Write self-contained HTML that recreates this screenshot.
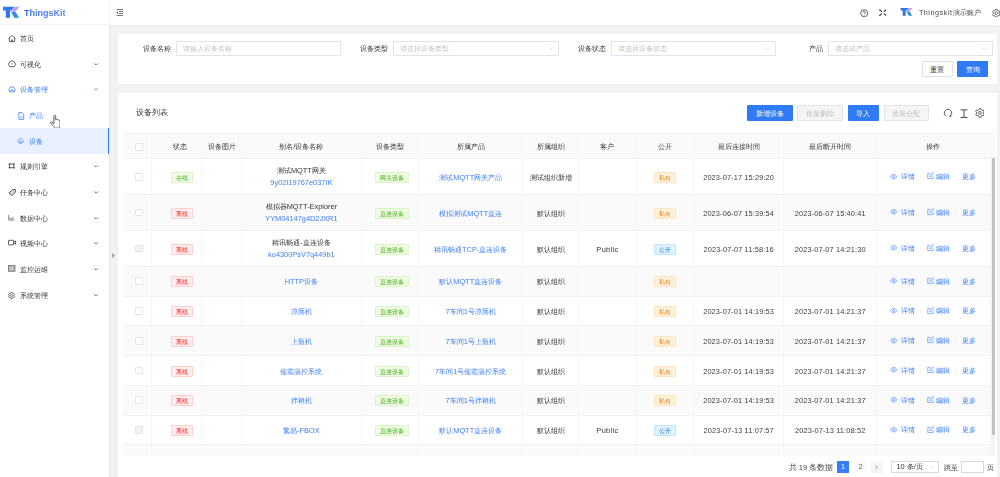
<!DOCTYPE html>
<html><head><meta charset="utf-8">
<style>
*{box-sizing:border-box;margin:0;padding:0}
html,body{width:1000px;height:477px;overflow:hidden;background:#f2f2f4;font-family:"Liberation Sans",sans-serif;font-size:7.4px;color:#333;}
.a{position:absolute}
#side{left:0;top:0;width:109.4px;height:477px;background:#fff;box-shadow:1px 0 2px rgba(0,0,0,.05);z-index:2}
#logo{left:0;top:0;width:109.4px;height:24.7px;border-bottom:1px solid #f3f3f3}
.mi{position:absolute;left:0;width:109.4px;height:25.6px;line-height:25.6px;color:#333;white-space:nowrap}
.mi .ic{position:absolute;left:8px;top:9.2px;width:8.1px;height:7.2px;overflow:visible}
.mi .tx{position:absolute;left:20.3px;top:0.5px;font-size:7.35px}
.mi .chev{position:absolute;left:94.2px;top:11.6px;width:4.4px;height:2.6px}
.mi.sub .ic{left:17.3px}
.mi.sub .tx{left:28.8px}
.mi.blue{color:#377dff}
.mi.sel{background:#e9f1ff;border-right:1.6px solid #377dff}
#hdr{left:109.4px;top:0;width:890.6px;height:24.7px;background:#fff;box-shadow:0 1px 2px rgba(0,0,0,.04)}
.card{position:absolute;left:117.6px;width:879.7px;background:#fff}
.lbl{position:absolute;top:40.5px;height:15.8px;line-height:15.8px;color:#333;text-align:right;white-space:nowrap}
.inp{position:absolute;top:40.5px;height:15.8px;width:164.3px;border:0.6px solid #e3e3e3;border-radius:1px;background:#fff;color:#c4c4c4;padding-left:5.5px;line-height:14.6px;white-space:nowrap}
.inp .dd{position:absolute;right:5px;top:5.8px;width:5px;height:3px}
.btn{position:absolute;height:16.4px;line-height:17.4px;text-align:center;border-radius:1px;font-size:7.4px;white-space:nowrap}
.btn.pri{background:#2f7bf6;color:#fff}
.btn.def{background:#fff;color:#333;border:0.6px solid #e0e0e0;line-height:16.2px}
.btn.dis{background:#f5f5f5;color:#c0c0c0;border:0.6px solid #e3e3e3;line-height:16.2px}
#tbl{position:absolute;left:122.6px;top:133.2px;width:868.3px;}
.th{position:absolute;left:0;top:0;width:868.3px;height:25.4px;background:#fafafa;border-top:0.6px solid #f2f2f2;border-bottom:0.6px solid #f2f2f2}
.td{position:absolute;top:0;height:100%;border-right:0.6px solid #f6f6f6;display:flex;flex-direction:column;align-items:center;justify-content:center;text-align:center;white-space:nowrap;line-height:10.5px;color:#333}
.th .td{color:#333;padding-top:3px}
.tr{position:absolute;left:0;width:868.3px;border-bottom:0.6px solid #f2f2f2;background:#fff}
.tr.st{background:#fafafa}
.stc{padding-left:11.5px}
.stch{padding-left:7.5px}
.typc{padding-left:4.6px}
.cb{display:inline-block;width:7.8px;height:7.8px;margin-left:4.2px;border:0.6px solid #e6e6e6;border-radius:1px;background:#fff}
.cb.dis{background:#f3f3f3;border-color:#e3e3e3}
.tag{display:inline-block;font-size:6.1px;line-height:10px;height:11px;padding:0 3.8px;position:relative;top:0.6px;border:0.6px solid;border-radius:1px}
.tag.green{color:#46ad16;background:#effbe3;border-color:#dcf4c8}
.tag.red{color:#ee1d28;background:#ffeceb;border-color:#ffd0cc}
.tag.orange{color:#e27b12;background:#fff1da;border-color:#ffe4be}
.tag.blue{color:#1f7ee0;background:#e0f2ff;border-color:#bde3ff}
.lk{color:#3f80f5}
.dt{letter-spacing:0.12px;color:#3d3d3d}
.t{position:relative;top:1.5px}
.t1{position:relative;top:0.6px;line-height:11.9px}
.opw{position:absolute;left:0;top:50%;width:100%;height:0;color:#377dff}
.opw>*{position:absolute}
.opw .t{position:absolute;top:-4.5px;line-height:10.5px;white-space:nowrap}
.opw .dv{top:-2.3px;width:0.6px;height:6px;background:#f6f6f6;margin:0}
.nm{color:#333}
.opc{flex-direction:row}
#body{position:absolute;left:0;top:26px;width:868.3px;height:296.6px;overflow:hidden}
#root{position:absolute;left:0;top:0;width:1000px;height:477px;overflow:hidden;filter:blur(0.28px)}
</style></head><body><div id="root">
<div id="side" class="a">
  <div id="logo" class="a">
    <svg class="a" style="left:0;top:0" width="24" height="24" viewBox="0 0 24 24">
      <path d="M3 6.8h11.2l-2.6 3.7H10v7.2H5.8v-7.2H3z" fill="#2b78f0"/>
      <path d="M11.2 11.8l3.3-5h5.1l-4.4 5z" fill="#c59df4"/>
      <path d="M11.2 11.8h4.1l3.8 5.9h-4.9z" fill="#2f8ee6"/>
    </svg>
    <div class="a" style="left:24px;top:7.6px;font-size:9px;font-weight:bold;line-height:11px;white-space:nowrap;background:linear-gradient(90deg,#3370ee,#5a7ff0);-webkit-background-clip:text;background-clip:text;color:transparent">ThingsKit</div>
  </div>
  <div class="mi" style="top:25.8px"><svg class="ic" viewBox="0 0 16 14"><path d="M1 6.8L8 1l7 5.8M2.8 5.6V13h10.4V5.6M6.8 13V9.6h2.4V13" fill="none" stroke="#444" stroke-width="1.6" stroke-linejoin="round"/></svg><span class="tx">首页</span></div>
  <div class="mi" style="top:51px"><svg class="ic" viewBox="0 0 16 14"><path d="M3.5 13A6.6 6.6 0 1 1 12.5 13z" fill="none" stroke="#444" stroke-width="1.7" stroke-linejoin="round"/><circle cx="8" cy="7.4" r="1.3" fill="#444"/></svg><span class="tx">可视化</span><svg class="chev" viewBox="0 0 10 6"><path d="M1 1l4 4 4-4" fill="none" stroke="#444" stroke-width="1.8"/></svg></div>
  <div class="mi blue" style="top:76.9px"><svg class="ic" viewBox="0 0 16 14" style="top:8.9px"><path d="M3.5 11.6A6.1 6.1 0 1 1 12.5 11.6" fill="none" stroke="#5f95f5" stroke-width="1.9"/><path d="M5.2 13V9.8A2.8 2.8 0 0 1 10.8 9.8V13M8 7V13.5" fill="none" stroke="#5f95f5" stroke-width="1.7"/></svg><span class="tx">设备管理</span><svg class="chev" viewBox="0 0 10 6"><path d="M1 5l4-4 4 4" fill="none" stroke="#377dff" stroke-width="1.8"/></svg></div>
  <div class="mi sub blue" style="top:102.9px"><svg class="ic" viewBox="0 0 16 14" style="width:6.5px;left:17.6px;top:8.7px;height:8px" preserveAspectRatio="none"><path d="M2 1h8l4 3.5V13H2z" fill="none" stroke="#377dff" stroke-width="1.6"/><path d="M5 9h6" stroke="#377dff" stroke-width="1.6"/></svg><span class="tx">产品</span></div>
  <div class="mi sub sel blue" style="top:128.4px;height:25.4px"><svg class="ic" viewBox="0 0 16 14" style="width:7.1px;left:16.8px;top:9.6px;height:6.2px"><path d="M3.5 11.6A6.1 6.1 0 1 1 12.5 11.6" fill="none" stroke="#5f95f5" stroke-width="1.9"/><path d="M5.2 13V9.8A2.8 2.8 0 0 1 10.8 9.8V13M8 7V13.5" fill="none" stroke="#5f95f5" stroke-width="1.7"/></svg><span class="tx">设备</span></div>
  <div class="mi" style="top:153.3px"><svg class="ic" viewBox="0 0 16 14" style="width:7.4px;left:7.6px;top:9.9px;height:5.8px" preserveAspectRatio="none"><path d="M1 2.5h14M1 11.5h14M3.5 1v12M12.5 1v12" fill="none" stroke="#444" stroke-width="2"/></svg><span class="tx">规则引擎</span><svg class="chev" viewBox="0 0 10 6"><path d="M1 1l4 4 4-4" fill="none" stroke="#444" stroke-width="1.8"/></svg></div>
  <div class="mi" style="top:179.8px"><svg class="ic" viewBox="0 0 16 14"><path d="M9.5 1H14.5V6L7.5 13 2 7.5z" fill="#ddd" stroke="#444" stroke-width="1.8" stroke-linejoin="round"/></svg><span class="tx">任务中心</span><svg class="chev" viewBox="0 0 10 6"><path d="M1 1l4 4 4-4" fill="none" stroke="#444" stroke-width="1.8"/></svg></div>
  <div class="mi" style="top:205.2px"><svg class="ic" viewBox="0 0 16 14" style="width:6.6px"><path d="M1.5 0v13h14M5 11.5V6M8.5 11.5V8M12 11.5V5" fill="none" stroke="#555" stroke-width="1.6"/></svg><span class="tx">数据中心</span><svg class="chev" viewBox="0 0 10 6"><path d="M1 1l4 4 4-4" fill="none" stroke="#444" stroke-width="1.8"/></svg></div>
  <div class="mi" style="top:230.4px"><svg class="ic" viewBox="0 0 16 14" style="top:8.8px"><rect x="1" y="2.5" width="10" height="9" rx="1" fill="none" stroke="#444" stroke-width="1.7"/><path d="M11 6l4-2.2v6.4L11 8" fill="none" stroke="#444" stroke-width="1.7" stroke-linejoin="round"/></svg><span class="tx">视频中心</span><svg class="chev" viewBox="0 0 10 6"><path d="M1 1l4 4 4-4" fill="none" stroke="#444" stroke-width="1.8"/></svg></div>
  <div class="mi" style="top:256.2px"><svg class="ic" viewBox="0 0 16 14" style="width:7.4px;height:6.8px;top:9.2px"><rect x="0.8" y="0.8" width="14.4" height="12.4" fill="#b0b0b0" stroke="#666" stroke-width="1.5"/><path d="M4 3.5l8 7M12 3.5l-8 7" stroke="#eee" stroke-width="1.4"/></svg><span class="tx">监控运维</span><svg class="chev" viewBox="0 0 10 6"><path d="M1 1l4 4 4-4" fill="none" stroke="#444" stroke-width="1.8"/></svg></div>
  <div class="mi" style="top:282.3px"><svg class="ic" viewBox="0 0 16 16" style="width:7.2px;height:7.2px;top:9.5px"><path d="M6.35 2.65 L6.57 0.94 L9.43 0.94 L9.65 2.65 L11.81 3.89 L13.40 3.23 L14.83 5.71 L13.46 6.76 L13.46 9.24 L14.83 10.29 L13.40 12.77 L11.81 12.11 L9.65 13.35 L9.43 15.06 L6.57 15.06 L6.35 13.35 L4.19 12.11 L2.60 12.77 L1.17 10.29 L2.54 9.24 L2.54 6.76 L1.17 5.71 L2.60 3.23 L4.19 3.89Z" fill="none" stroke="#444" stroke-width="1.5" stroke-linejoin="round"/><circle cx="8" cy="8" r="2.4" fill="none" stroke="#444" stroke-width="1.5"/></svg><span class="tx">系统管理</span><svg class="chev" viewBox="0 0 10 6"><path d="M1 1l4 4 4-4" fill="none" stroke="#444" stroke-width="1.8"/></svg></div>
</div>
<svg class="a" style="left:111.8px;top:252.6px;z-index:3" width="3.5" height="5" viewBox="0 0 7 10"><path d="M0 0l7 5-7 5z" fill="#a8a8a8"/></svg>
<div id="hdr" class="a">
  <svg class="a" style="left:6.3px;top:8.8px" width="7.5" height="7.2" viewBox="0 0 15 14"><path d="M1 1h13M6 5h8M6 9h8M1 13h13" fill="none" stroke="#333" stroke-width="1.4"/><path d="M0.5 7L4 4.6v4.8z" fill="#333"/></svg>
  <svg class="a" style="left:751px;top:9.2px" width="8.4" height="8.4" viewBox="0 0 16 16"><circle cx="8" cy="8" r="6.8" fill="none" stroke="#444" stroke-width="1.5"/><path d="M6 6.2a2 2 0 1 1 2.8 1.8c-.6.3-.8.7-.8 1.3v.6" fill="none" stroke="#444" stroke-width="1.5"/><circle cx="8" cy="11.8" r=".9" fill="#444"/></svg>
  <svg class="a" style="left:878.6px;top:8.6px;margin-left:-109.4px" width="7.8" height="7.2" viewBox="0 0 16 14"><path d="M1.5 1.5l4 3.2M14.5 1.5l-4 3.2M1.5 12.5l4-3.2M14.5 12.5l-4-3.2" fill="none" stroke="#444" stroke-width="2.2" stroke-linecap="round"/><path d="M0.5 0.5h3.2l-2.2 2.6zM15.5 0.5h-3.2l2.2 2.6zM0.5 13.5h3.2l-2.2-2.6zM15.5 13.5h-3.2l2.2-2.6z" fill="#444"/></svg>
  <svg class="a" style="left:788.2px;top:2.2px" width="24" height="24" viewBox="0 0 24 24">
      <g transform="translate(0.5,1) scale(0.72)"><path d="M3 6.8h11.2l-2.6 3.7H10v7.2H5.8v-7.2H3z" fill="#2b78f0"/>
      <path d="M11.2 11.8l3.3-5h5.1l-4.4 5z" fill="#c59df4"/>
      <path d="M11.2 11.8h4.1l3.8 5.9h-4.9z" fill="#2f8ee6"/></g>
  </svg>
  <div class="a" style="left:809.5px;top:8px;line-height:10px;color:#444;white-space:nowrap;font-size:7.1px"><span style="letter-spacing:0.6px">Thingskit</span>演示账户</div>
  <svg class="a" style="left:882.5px;top:8.6px" width="8.6" height="8.6" viewBox="0 0 16 16"><path d="M6.35 2.65 L6.57 0.94 L9.43 0.94 L9.65 2.65 L11.81 3.89 L13.40 3.23 L14.83 5.71 L13.46 6.76 L13.46 9.24 L14.83 10.29 L13.40 12.77 L11.81 12.11 L9.65 13.35 L9.43 15.06 L6.57 15.06 L6.35 13.35 L4.19 12.11 L2.60 12.77 L1.17 10.29 L2.54 9.24 L2.54 6.76 L1.17 5.71 L2.60 3.23 L4.19 3.89Z" fill="none" stroke="#444" stroke-width="1.4" stroke-linejoin="round"/><circle cx="8" cy="8" r="2.4" fill="none" stroke="#444" stroke-width="1.4"/></svg>
</div>
<div class="card" style="top:33.6px;height:50.6px">
</div>
<div class="lbl" style="left:142.7px">设备名称</div>
<div class="inp" style="left:176px;width:164.8px">请输入设备名称</div>
<div class="lbl" style="left:360px">设备类型</div>
<div class="inp" style="left:393.2px;width:165.4px">请选择设备类型<svg class="dd" viewBox="0 0 10 6"><path d="M1 1l4 4 4-4" fill="none" stroke="#bfbfbf" stroke-width="1"/></svg></div>
<div class="lbl" style="left:577.5px">设备状态</div>
<div class="inp" style="left:611.2px;width:164.6px">请选择设备状态<svg class="dd" viewBox="0 0 10 6"><path d="M1 1l4 4 4-4" fill="none" stroke="#bfbfbf" stroke-width="1"/></svg></div>
<div class="lbl" style="left:809px">产品</div>
<div class="inp" style="left:828.2px;width:164.4px">请选择产品<svg class="dd" viewBox="0 0 10 6"><path d="M1 1l4 4 4-4" fill="none" stroke="#bfbfbf" stroke-width="1"/></svg></div>
<div class="btn def" style="left:921.5px;top:61.1px;width:31px">重置</div>
<div class="btn pri" style="left:957.2px;top:61.1px;width:30.9px">查询</div>

<div class="card" style="top:92.6px;height:384.4px">
</div>
<div class="a" style="left:136px;top:108.2px;font-size:8.2px;line-height:10px;color:#333">设备列表</div>
<div class="btn pri" style="left:747.3px;top:104.9px;width:46px;height:16.6px">新增设备</div>
<div class="btn dis" style="left:797.2px;top:104.9px;width:46.3px;height:16.6px">批量删除</div>
<div class="btn pri" style="left:847.9px;top:104.9px;width:31.2px;height:16.6px">导入</div>
<div class="btn dis" style="left:883.5px;top:104.9px;width:45.8px;height:16.6px">批量分配</div>
<svg class="a" style="left:942.6px;top:108.4px" width="10" height="10" viewBox="0 0 20 20"><path d="M5.6 16A7.4 7.4 0 1 1 14.4 16" fill="none" stroke="#444" stroke-width="1.8"/><path d="M15.8 13.2l.6 4.6-4.4-.6z" fill="#444"/></svg>
<svg class="a" style="left:959.8px;top:108.6px" width="8" height="9.6" viewBox="0 0 16 19"><path d="M1 1.6h14M8 1.6v15" fill="none" stroke="#444" stroke-width="1.9"/><path d="M1 17h14" stroke="#555" stroke-width="2.6"/></svg>
<svg class="a" style="left:974.6px;top:108.2px" width="9.8" height="9.8" viewBox="0 0 16 16"><path d="M6.35 2.65 L6.57 0.94 L9.43 0.94 L9.65 2.65 L11.81 3.89 L13.40 3.23 L14.83 5.71 L13.46 6.76 L13.46 9.24 L14.83 10.29 L13.40 12.77 L11.81 12.11 L9.65 13.35 L9.43 15.06 L6.57 15.06 L6.35 13.35 L4.19 12.11 L2.60 12.77 L1.17 10.29 L2.54 9.24 L2.54 6.76 L1.17 5.71 L2.60 3.23 L4.19 3.89Z" fill="none" stroke="#444" stroke-width="1.3" stroke-linejoin="round"/><circle cx="8" cy="8" r="2.3" fill="none" stroke="#444" stroke-width="1.3"/></svg>

<div id="tbl">
  <div class="th"><div class="td " style="left:0.00px;width:29.20px"><span class="cb"></span></div><div class="td stch" style="left:29.20px;width:50.30px">状态</div><div class="td " style="left:79.50px;width:40.10px">设备图片</div><div class="td " style="left:119.60px;width:119.40px">别名/设备名称</div><div class="td " style="left:239.00px;width:57.60px">设备类型</div><div class="td " style="left:296.60px;width:104.00px">所属产品</div><div class="td " style="left:400.60px;width:56.00px">所属组织</div><div class="td " style="left:456.60px;width:57.60px">客户</div><div class="td " style="left:514.20px;width:57.00px">公开</div><div class="td " style="left:571.20px;width:90.70px">最后连接时间</div><div class="td " style="left:661.90px;width:92.40px">最后断开时间</div><div class="td " style="left:754.30px;width:114.00px">操作</div></div>
  <div id="body"><div class="tr" style="top:0.00px;height:35.9px"><div class="td " style="left:0.00px;width:29.20px"><span class="cb"></span></div><div class="td stc" style="left:29.20px;width:50.30px"><span class="tag green">在线</span></div><div class="td " style="left:79.50px;width:40.10px"></div><div class="td " style="left:119.60px;width:119.40px"><div class="nm t1">测试MQTT网关</div><div class="lk t1">9y02I19767e037IK</div></div><div class="td typc" style="left:239.00px;width:57.60px"><span class="tag green">网关设备</span></div><div class="td " style="left:296.60px;width:104.00px"><span class="lk t">测试MQTT网关产品</span></div><div class="td " style="left:400.60px;width:56.00px"><span class="t">测试组织新增</span></div><div class="td " style="left:456.60px;width:57.60px"><span class="t"></span></div><div class="td " style="left:514.20px;width:57.00px"><span class="tag orange">私有</span></div><div class="td " style="left:571.20px;width:90.70px"><span class="t dt">2023-07-17 15:29:20</span></div><div class="td " style="left:661.90px;width:92.40px"><span class="t dt"></span></div><div class="td opc" style="left:754.30px;width:114.00px"><div class="opw"><svg class="a" style="left:13.4px;top:-4.1px" viewBox="0 0 16 16" width="7.4" height="7.4"><path d="M1 8c1.8-3.2 4.2-4.8 7-4.8s5.2 1.6 7 4.8c-1.8 3.2-4.2 4.8-7 4.8S2.8 11.2 1 8z" fill="none" stroke="currentColor" stroke-width="1.3"/><circle cx="8" cy="8" r="2.2" fill="none" stroke="currentColor" stroke-width="1.3"/></svg><span class="a t" style="left:23.8px">详情</span><span class="a dv" style="left:43px"></span><svg class="a" style="left:49.8px;top:-4.3px" viewBox="0 0 16 16" width="7.4" height="7.4"><path d="M13 9v5.3H1.7V3h5.5" fill="none" stroke="currentColor" stroke-width="1.3"/><path d="M6 10l.6-2.6L13 1l2 2-6.4 6.4z" fill="none" stroke="currentColor" stroke-width="1.2"/></svg><span class="a t" style="left:59.6px">编辑</span><span class="a dv" style="left:78.5px"></span><span class="a t" style="left:85px">更多</span></div></div></div>
<div class="tr st" style="top:35.90px;height:35.9px"><div class="td " style="left:0.00px;width:29.20px"><span class="cb"></span></div><div class="td stc" style="left:29.20px;width:50.30px"><span class="tag red">离线</span></div><div class="td " style="left:79.50px;width:40.10px"></div><div class="td " style="left:119.60px;width:119.40px"><div class="nm t1">模拟器MQTT-Explorer</div><div class="lk t1">YYM04147g4D2JXR1</div></div><div class="td typc" style="left:239.00px;width:57.60px"><span class="tag green">直连设备</span></div><div class="td " style="left:296.60px;width:104.00px"><span class="lk t">模拟测试MQTT直连</span></div><div class="td " style="left:400.60px;width:56.00px"><span class="t">默认组织</span></div><div class="td " style="left:456.60px;width:57.60px"><span class="t"></span></div><div class="td " style="left:514.20px;width:57.00px"><span class="tag orange">私有</span></div><div class="td " style="left:571.20px;width:90.70px"><span class="t dt">2023-06-07 15:39:54</span></div><div class="td " style="left:661.90px;width:92.40px"><span class="t dt">2023-06-07 15:40:41</span></div><div class="td opc" style="left:754.30px;width:114.00px"><div class="opw"><svg class="a" style="left:13.4px;top:-4.1px" viewBox="0 0 16 16" width="7.4" height="7.4"><path d="M1 8c1.8-3.2 4.2-4.8 7-4.8s5.2 1.6 7 4.8c-1.8 3.2-4.2 4.8-7 4.8S2.8 11.2 1 8z" fill="none" stroke="currentColor" stroke-width="1.3"/><circle cx="8" cy="8" r="2.2" fill="none" stroke="currentColor" stroke-width="1.3"/></svg><span class="a t" style="left:23.8px">详情</span><span class="a dv" style="left:43px"></span><svg class="a" style="left:49.8px;top:-4.3px" viewBox="0 0 16 16" width="7.4" height="7.4"><path d="M13 9v5.3H1.7V3h5.5" fill="none" stroke="currentColor" stroke-width="1.3"/><path d="M6 10l.6-2.6L13 1l2 2-6.4 6.4z" fill="none" stroke="currentColor" stroke-width="1.2"/></svg><span class="a t" style="left:59.6px">编辑</span><span class="a dv" style="left:78.5px"></span><span class="a t" style="left:85px">更多</span></div></div></div>
<div class="tr" style="top:71.80px;height:35.9px"><div class="td " style="left:0.00px;width:29.20px"><span class="cb dis"></span></div><div class="td stc" style="left:29.20px;width:50.30px"><span class="tag red">离线</span></div><div class="td " style="left:79.50px;width:40.10px"></div><div class="td " style="left:119.60px;width:119.40px"><div class="nm t1">精讯畅通-直连设备</div><div class="lk t1">ko4300PsV7q449b1</div></div><div class="td typc" style="left:239.00px;width:57.60px"><span class="tag green">直连设备</span></div><div class="td " style="left:296.60px;width:104.00px"><span class="lk t">精讯畅通TCP-直连设备</span></div><div class="td " style="left:400.60px;width:56.00px"><span class="t">默认组织</span></div><div class="td " style="left:456.60px;width:57.60px"><span class="t"><span style="letter-spacing:0.35px">Public</span></span></div><div class="td " style="left:514.20px;width:57.00px"><span class="tag blue">公开</span></div><div class="td " style="left:571.20px;width:90.70px"><span class="t dt">2023-07-07 11:58:16</span></div><div class="td " style="left:661.90px;width:92.40px"><span class="t dt">2023-07-07 14:21:30</span></div><div class="td opc" style="left:754.30px;width:114.00px"><div class="opw"><svg class="a" style="left:13.4px;top:-4.1px" viewBox="0 0 16 16" width="7.4" height="7.4"><path d="M1 8c1.8-3.2 4.2-4.8 7-4.8s5.2 1.6 7 4.8c-1.8 3.2-4.2 4.8-7 4.8S2.8 11.2 1 8z" fill="none" stroke="currentColor" stroke-width="1.3"/><circle cx="8" cy="8" r="2.2" fill="none" stroke="currentColor" stroke-width="1.3"/></svg><span class="a t" style="left:23.8px">详情</span><span class="a dv" style="left:43px"></span><svg class="a" style="left:49.8px;top:-4.3px" viewBox="0 0 16 16" width="7.4" height="7.4"><path d="M13 9v5.3H1.7V3h5.5" fill="none" stroke="currentColor" stroke-width="1.3"/><path d="M6 10l.6-2.6L13 1l2 2-6.4 6.4z" fill="none" stroke="currentColor" stroke-width="1.2"/></svg><span class="a t" style="left:59.6px">编辑</span><span class="a dv" style="left:78.5px"></span><span class="a t" style="left:85px">更多</span></div></div></div>
<div class="tr st" style="top:107.70px;height:29.73px"><div class="td " style="left:0.00px;width:29.20px"><span class="cb"></span></div><div class="td stc" style="left:29.20px;width:50.30px"><span class="tag red">离线</span></div><div class="td " style="left:79.50px;width:40.10px"></div><div class="td " style="left:119.60px;width:119.40px"><div class="lk t">HTTP设备</div></div><div class="td typc" style="left:239.00px;width:57.60px"><span class="tag green">直连设备</span></div><div class="td " style="left:296.60px;width:104.00px"><span class="lk t">默认MQTT直连设备</span></div><div class="td " style="left:400.60px;width:56.00px"><span class="t">默认组织</span></div><div class="td " style="left:456.60px;width:57.60px"><span class="t"></span></div><div class="td " style="left:514.20px;width:57.00px"><span class="tag orange">私有</span></div><div class="td " style="left:571.20px;width:90.70px"><span class="t dt"></span></div><div class="td " style="left:661.90px;width:92.40px"><span class="t dt"></span></div><div class="td opc" style="left:754.30px;width:114.00px"><div class="opw"><svg class="a" style="left:13.4px;top:-4.1px" viewBox="0 0 16 16" width="7.4" height="7.4"><path d="M1 8c1.8-3.2 4.2-4.8 7-4.8s5.2 1.6 7 4.8c-1.8 3.2-4.2 4.8-7 4.8S2.8 11.2 1 8z" fill="none" stroke="currentColor" stroke-width="1.3"/><circle cx="8" cy="8" r="2.2" fill="none" stroke="currentColor" stroke-width="1.3"/></svg><span class="a t" style="left:23.8px">详情</span><span class="a dv" style="left:43px"></span><svg class="a" style="left:49.8px;top:-4.3px" viewBox="0 0 16 16" width="7.4" height="7.4"><path d="M13 9v5.3H1.7V3h5.5" fill="none" stroke="currentColor" stroke-width="1.3"/><path d="M6 10l.6-2.6L13 1l2 2-6.4 6.4z" fill="none" stroke="currentColor" stroke-width="1.2"/></svg><span class="a t" style="left:59.6px">编辑</span><span class="a dv" style="left:78.5px"></span><span class="a t" style="left:85px">更多</span></div></div></div>
<div class="tr" style="top:137.43px;height:29.73px"><div class="td " style="left:0.00px;width:29.20px"><span class="cb"></span></div><div class="td stc" style="left:29.20px;width:50.30px"><span class="tag red">离线</span></div><div class="td " style="left:79.50px;width:40.10px"></div><div class="td " style="left:119.60px;width:119.40px"><div class="lk t">凉面机</div></div><div class="td typc" style="left:239.00px;width:57.60px"><span class="tag green">直连设备</span></div><div class="td " style="left:296.60px;width:104.00px"><span class="lk t">7车间1号凉面机</span></div><div class="td " style="left:400.60px;width:56.00px"><span class="t">默认组织</span></div><div class="td " style="left:456.60px;width:57.60px"><span class="t"></span></div><div class="td " style="left:514.20px;width:57.00px"><span class="tag orange">私有</span></div><div class="td " style="left:571.20px;width:90.70px"><span class="t dt">2023-07-01 14:19:53</span></div><div class="td " style="left:661.90px;width:92.40px"><span class="t dt">2023-07-01 14:21:37</span></div><div class="td opc" style="left:754.30px;width:114.00px"><div class="opw"><svg class="a" style="left:13.4px;top:-4.1px" viewBox="0 0 16 16" width="7.4" height="7.4"><path d="M1 8c1.8-3.2 4.2-4.8 7-4.8s5.2 1.6 7 4.8c-1.8 3.2-4.2 4.8-7 4.8S2.8 11.2 1 8z" fill="none" stroke="currentColor" stroke-width="1.3"/><circle cx="8" cy="8" r="2.2" fill="none" stroke="currentColor" stroke-width="1.3"/></svg><span class="a t" style="left:23.8px">详情</span><span class="a dv" style="left:43px"></span><svg class="a" style="left:49.8px;top:-4.3px" viewBox="0 0 16 16" width="7.4" height="7.4"><path d="M13 9v5.3H1.7V3h5.5" fill="none" stroke="currentColor" stroke-width="1.3"/><path d="M6 10l.6-2.6L13 1l2 2-6.4 6.4z" fill="none" stroke="currentColor" stroke-width="1.2"/></svg><span class="a t" style="left:59.6px">编辑</span><span class="a dv" style="left:78.5px"></span><span class="a t" style="left:85px">更多</span></div></div></div>
<div class="tr st" style="top:167.16px;height:29.73px"><div class="td " style="left:0.00px;width:29.20px"><span class="cb"></span></div><div class="td stc" style="left:29.20px;width:50.30px"><span class="tag red">离线</span></div><div class="td " style="left:79.50px;width:40.10px"></div><div class="td " style="left:119.60px;width:119.40px"><div class="lk t">上瓶机</div></div><div class="td typc" style="left:239.00px;width:57.60px"><span class="tag green">直连设备</span></div><div class="td " style="left:296.60px;width:104.00px"><span class="lk t">7车间1号上瓶机</span></div><div class="td " style="left:400.60px;width:56.00px"><span class="t">默认组织</span></div><div class="td " style="left:456.60px;width:57.60px"><span class="t"></span></div><div class="td " style="left:514.20px;width:57.00px"><span class="tag orange">私有</span></div><div class="td " style="left:571.20px;width:90.70px"><span class="t dt">2023-07-01 14:19:53</span></div><div class="td " style="left:661.90px;width:92.40px"><span class="t dt">2023-07-01 14:21:37</span></div><div class="td opc" style="left:754.30px;width:114.00px"><div class="opw"><svg class="a" style="left:13.4px;top:-4.1px" viewBox="0 0 16 16" width="7.4" height="7.4"><path d="M1 8c1.8-3.2 4.2-4.8 7-4.8s5.2 1.6 7 4.8c-1.8 3.2-4.2 4.8-7 4.8S2.8 11.2 1 8z" fill="none" stroke="currentColor" stroke-width="1.3"/><circle cx="8" cy="8" r="2.2" fill="none" stroke="currentColor" stroke-width="1.3"/></svg><span class="a t" style="left:23.8px">详情</span><span class="a dv" style="left:43px"></span><svg class="a" style="left:49.8px;top:-4.3px" viewBox="0 0 16 16" width="7.4" height="7.4"><path d="M13 9v5.3H1.7V3h5.5" fill="none" stroke="currentColor" stroke-width="1.3"/><path d="M6 10l.6-2.6L13 1l2 2-6.4 6.4z" fill="none" stroke="currentColor" stroke-width="1.2"/></svg><span class="a t" style="left:59.6px">编辑</span><span class="a dv" style="left:78.5px"></span><span class="a t" style="left:85px">更多</span></div></div></div>
<div class="tr" style="top:196.89px;height:29.73px"><div class="td " style="left:0.00px;width:29.20px"><span class="cb"></span></div><div class="td stc" style="left:29.20px;width:50.30px"><span class="tag red">离线</span></div><div class="td " style="left:79.50px;width:40.10px"></div><div class="td " style="left:119.60px;width:119.40px"><div class="lk t">催霜温控系统</div></div><div class="td typc" style="left:239.00px;width:57.60px"><span class="tag green">直连设备</span></div><div class="td " style="left:296.60px;width:104.00px"><span class="lk t">7车间1号催霜温控系统</span></div><div class="td " style="left:400.60px;width:56.00px"><span class="t">默认组织</span></div><div class="td " style="left:456.60px;width:57.60px"><span class="t"></span></div><div class="td " style="left:514.20px;width:57.00px"><span class="tag orange">私有</span></div><div class="td " style="left:571.20px;width:90.70px"><span class="t dt">2023-07-01 14:19:53</span></div><div class="td " style="left:661.90px;width:92.40px"><span class="t dt">2023-07-01 14:21:37</span></div><div class="td opc" style="left:754.30px;width:114.00px"><div class="opw"><svg class="a" style="left:13.4px;top:-4.1px" viewBox="0 0 16 16" width="7.4" height="7.4"><path d="M1 8c1.8-3.2 4.2-4.8 7-4.8s5.2 1.6 7 4.8c-1.8 3.2-4.2 4.8-7 4.8S2.8 11.2 1 8z" fill="none" stroke="currentColor" stroke-width="1.3"/><circle cx="8" cy="8" r="2.2" fill="none" stroke="currentColor" stroke-width="1.3"/></svg><span class="a t" style="left:23.8px">详情</span><span class="a dv" style="left:43px"></span><svg class="a" style="left:49.8px;top:-4.3px" viewBox="0 0 16 16" width="7.4" height="7.4"><path d="M13 9v5.3H1.7V3h5.5" fill="none" stroke="currentColor" stroke-width="1.3"/><path d="M6 10l.6-2.6L13 1l2 2-6.4 6.4z" fill="none" stroke="currentColor" stroke-width="1.2"/></svg><span class="a t" style="left:59.6px">编辑</span><span class="a dv" style="left:78.5px"></span><span class="a t" style="left:85px">更多</span></div></div></div>
<div class="tr st" style="top:226.62px;height:29.73px"><div class="td " style="left:0.00px;width:29.20px"><span class="cb"></span></div><div class="td stc" style="left:29.20px;width:50.30px"><span class="tag red">离线</span></div><div class="td " style="left:79.50px;width:40.10px"></div><div class="td " style="left:119.60px;width:119.40px"><div class="lk t">拌粮机</div></div><div class="td typc" style="left:239.00px;width:57.60px"><span class="tag green">直连设备</span></div><div class="td " style="left:296.60px;width:104.00px"><span class="lk t">7车间1号拌粮机</span></div><div class="td " style="left:400.60px;width:56.00px"><span class="t">默认组织</span></div><div class="td " style="left:456.60px;width:57.60px"><span class="t"></span></div><div class="td " style="left:514.20px;width:57.00px"><span class="tag orange">私有</span></div><div class="td " style="left:571.20px;width:90.70px"><span class="t dt">2023-07-01 14:19:53</span></div><div class="td " style="left:661.90px;width:92.40px"><span class="t dt">2023-07-01 14:21:37</span></div><div class="td opc" style="left:754.30px;width:114.00px"><div class="opw"><svg class="a" style="left:13.4px;top:-4.1px" viewBox="0 0 16 16" width="7.4" height="7.4"><path d="M1 8c1.8-3.2 4.2-4.8 7-4.8s5.2 1.6 7 4.8c-1.8 3.2-4.2 4.8-7 4.8S2.8 11.2 1 8z" fill="none" stroke="currentColor" stroke-width="1.3"/><circle cx="8" cy="8" r="2.2" fill="none" stroke="currentColor" stroke-width="1.3"/></svg><span class="a t" style="left:23.8px">详情</span><span class="a dv" style="left:43px"></span><svg class="a" style="left:49.8px;top:-4.3px" viewBox="0 0 16 16" width="7.4" height="7.4"><path d="M13 9v5.3H1.7V3h5.5" fill="none" stroke="currentColor" stroke-width="1.3"/><path d="M6 10l.6-2.6L13 1l2 2-6.4 6.4z" fill="none" stroke="currentColor" stroke-width="1.2"/></svg><span class="a t" style="left:59.6px">编辑</span><span class="a dv" style="left:78.5px"></span><span class="a t" style="left:85px">更多</span></div></div></div>
<div class="tr" style="top:256.35px;height:29.73px"><div class="td " style="left:0.00px;width:29.20px"><span class="cb dis"></span></div><div class="td stc" style="left:29.20px;width:50.30px"><span class="tag red">离线</span></div><div class="td " style="left:79.50px;width:40.10px"></div><div class="td " style="left:119.60px;width:119.40px"><div class="lk t">繁易-FBOX</div></div><div class="td typc" style="left:239.00px;width:57.60px"><span class="tag green">直连设备</span></div><div class="td " style="left:296.60px;width:104.00px"><span class="lk t">默认MQTT直连设备</span></div><div class="td " style="left:400.60px;width:56.00px"><span class="t">默认组织</span></div><div class="td " style="left:456.60px;width:57.60px"><span class="t"><span style="letter-spacing:0.35px">Public</span></span></div><div class="td " style="left:514.20px;width:57.00px"><span class="tag blue">公开</span></div><div class="td " style="left:571.20px;width:90.70px"><span class="t dt">2023-07-13 11:07:57</span></div><div class="td " style="left:661.90px;width:92.40px"><span class="t dt">2023-07-13 11:08:52</span></div><div class="td opc" style="left:754.30px;width:114.00px"><div class="opw"><svg class="a" style="left:13.4px;top:-4.1px" viewBox="0 0 16 16" width="7.4" height="7.4"><path d="M1 8c1.8-3.2 4.2-4.8 7-4.8s5.2 1.6 7 4.8c-1.8 3.2-4.2 4.8-7 4.8S2.8 11.2 1 8z" fill="none" stroke="currentColor" stroke-width="1.3"/><circle cx="8" cy="8" r="2.2" fill="none" stroke="currentColor" stroke-width="1.3"/></svg><span class="a t" style="left:23.8px">详情</span><span class="a dv" style="left:43px"></span><svg class="a" style="left:49.8px;top:-4.3px" viewBox="0 0 16 16" width="7.4" height="7.4"><path d="M13 9v5.3H1.7V3h5.5" fill="none" stroke="currentColor" stroke-width="1.3"/><path d="M6 10l.6-2.6L13 1l2 2-6.4 6.4z" fill="none" stroke="currentColor" stroke-width="1.2"/></svg><span class="a t" style="left:59.6px">编辑</span><span class="a dv" style="left:78.5px"></span><span class="a t" style="left:85px">更多</span></div></div></div>
<div class="tr st" style="top:286.08px;height:29.73px"><div class="td " style="left:0.00px;width:29.20px"></div><div class="td stc" style="left:29.20px;width:50.30px"></div><div class="td " style="left:79.50px;width:40.10px"></div><div class="td " style="left:119.60px;width:119.40px"></div><div class="td typc" style="left:239.00px;width:57.60px"></div><div class="td " style="left:296.60px;width:104.00px"></div><div class="td " style="left:400.60px;width:56.00px"><span class="t"></span></div><div class="td " style="left:456.60px;width:57.60px"><span class="t"></span></div><div class="td " style="left:514.20px;width:57.00px"></div><div class="td " style="left:571.20px;width:90.70px"><span class="t dt"></span></div><div class="td " style="left:661.90px;width:92.40px"><span class="t dt"></span></div><div class="td opc" style="left:754.30px;width:114.00px"></div></div></div>
</div>
<div class="a" style="left:990.9px;top:133.2px;width:4.2px;height:25px;background:#fafafa"></div>
<div class="a" style="left:991.3px;top:158.2px;width:3.8px;height:297px;background:#f5f5f5"></div>
<div class="a" style="left:991.5px;top:158.2px;width:3.5px;height:276.7px;background:#c1c1c1;border-radius:0"></div>

<div class="a" style="left:788.6px;top:462.6px;line-height:10px;white-space:nowrap;color:#444;font-size:7.6px">共 19 条数据</div>
<div class="a" style="left:837px;top:461px;width:12.3px;height:11.7px;background:#377dff;color:#fff;text-align:center;line-height:11.7px">1</div>
<div class="a" style="left:854.5px;top:461px;width:12.3px;height:11.7px;background:#fafafa;color:#666;text-align:center;line-height:11.7px">2</div>
<div class="a" style="left:870.6px;top:461px;width:12.3px;height:11.7px;background:#f6f6f6"><svg class="a" style="left:4.6px;top:3.8px" width="3.2" height="4.4" viewBox="0 0 6 9"><path d="M1 1l3.5 3.5L1 8" fill="none" stroke="#666" stroke-width="1.3"/></svg></div>
<div class="a" style="left:891.4px;top:461px;width:47.2px;height:11.7px;border:0.6px solid #d9d9d9;color:#333;line-height:10.5px;padding-left:4px;white-space:nowrap">10 条/页<svg class="a" style="left:38px;top:4.2px" width="4.5" height="2.6" viewBox="0 0 10 6"><path d="M1 1l4 4 4-4" fill="none" stroke="#bfbfbf" stroke-width="1"/></svg></div>
<div class="a" style="left:943.6px;top:462.5px;line-height:10px;color:#333">跳至</div>
<div class="a" style="left:961.4px;top:461px;width:22.4px;height:11.7px;border:0.6px solid #d9d9d9;background:#fff"></div>
<div class="a" style="left:987.4px;top:462.5px;line-height:10px;color:#333">页</div>

<svg class="a" style="left:50px;top:114.8px;z-index:5" width="10.4" height="13" viewBox="0 0 10.4 13"><path d="M3.9 8.6V1.2c0-.6.4-1 .9-1s.9.4.9 1v3.5c.3-.5 1.3-.6 1.6.1.4-.4 1.3-.3 1.5.4.5-.2 1.2.1 1.3.7v4c0 1.4-.8 2.6-1.6 3.3H5.2c-.7-.4-1.2-1.1-1.6-1.7L.6 7.9c-.4-.6.3-1.3.9-.9z" fill="#fff" stroke="#333" stroke-width=".8"/></svg>
</div></body></html>
